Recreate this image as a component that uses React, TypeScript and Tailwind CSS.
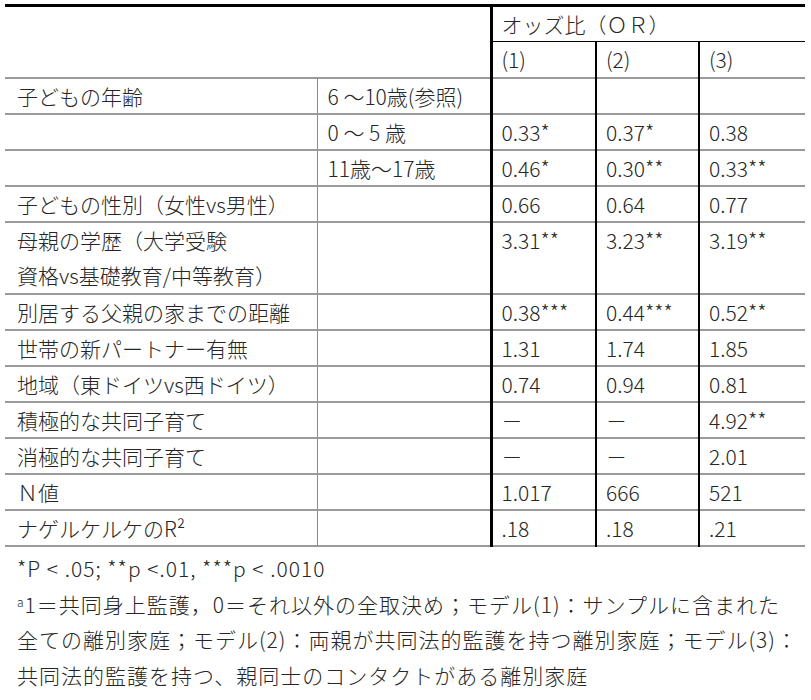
const rows: { label: string; sub?: string; v: [string, string, string]; tall?: boolean }[] = [
  { label: "子どもの年齢", sub: "6 ～10歳(参照)", v: ["", "", ""] },
  { label: "", sub: "0 ～ 5 歳", v: ["0.33*", "0.37*", "0.38"] },
  { label: "", sub: "11歳～17歳", v: ["0.46*", "0.30**", "0.33**"] },
  { label: "子どもの性別（女性vs男性）", v: ["0.66", "0.64", "0.77"] },
  { label: "母親の学歴（大学受験\n資格vs基礎教育/中等教育）", v: ["3.31**", "3.23**", "3.19**"], tall: true },
  { label: "別居する父親の家までの距離", v: ["0.38***", "0.44***", "0.52**"] },
  { label: "世帯の新パートナー有無", v: ["1.31", "1.74", "1.85"] },
  { label: "地域（東ドイツvs西ドイツ）", v: ["0.74", "0.94", "0.81"] },
  { label: "積極的な共同子育て", v: ["－", "－", "4.92**"] },
  { label: "消極的な共同子育て", v: ["－", "－", "2.01"] },
  { label: "Ｎ値", v: ["1.017", "666", "521"] },
  { label: "ナゲルケルケのR²", v: [".18", ".18", ".21"] },
]

export default function App() {
  return (
    <div
      className="w-[811px] h-[700px] bg-white pl-[5px] pt-[4px] text-[#262626] text-[21px] font-light"
      style={{ fontFamily: '"Noto Sans CJK JP", "Noto Sans", sans-serif' }}
    >
      <table className="border-collapse table-fixed w-[800px]">
        <colgroup>
          <col className="w-[312px]" />
          <col className="w-[174px]" />
          <col className="w-[105px]" />
          <col className="w-[103px]" />
          <col className="w-[106px]" />
        </colgroup>
        <thead>
          <tr className="border-t-[3px] border-t-black">
            <td colSpan={2} rowSpan={2} className="border-b-2 border-b-[#9a9a9a]" />
            <td colSpan={3} className="border-l-[3px] border-l-black border-b-[1.5px] border-b-black pl-[9px] leading-[34px]">
              オッズ比（ＯＲ）
            </td>
          </tr>
          <tr className="border-b-2 border-b-[#9a9a9a]">
            <td className="border-l-[3px] border-l-black pl-[9px] leading-[35px]">(1)</td>
            <td className="border-l-2 border-l-black pl-[9px] leading-[35px]">(2)</td>
            <td className="border-l-2 border-l-black pl-[9px] leading-[35px]">(3)</td>
          </tr>
        </thead>
        <tbody>
          {rows.map((r, i) => (
            <tr key={i} className={`border-b-2 border-b-[#9a9a9a] align-top ${r.tall ? "leading-[35px]" : "leading-[34px]"}`}>
              <td className="pl-[12px] whitespace-pre-line">{r.label}</td>
              <td className="border-l border-l-[#8a8a8a] pl-[10px] whitespace-nowrap">{r.sub ?? ""}</td>
              <td className="border-l-[3px] border-l-black pl-[9px]">{r.v[0]}</td>
              <td className="border-l-2 border-l-black pl-[9px]">{r.v[1]}</td>
              <td className="border-l-2 border-l-black pl-[9px]">{r.v[2]}</td>
            </tr>
          ))}
        </tbody>
      </table>
      <div className="pl-[12px] mt-[4px] leading-[35.5px] text-[21px] tracking-[1px] whitespace-nowrap">
        <div>*P &lt; .05; **p &lt;.01, ***p &lt; .0010</div>
        <div>
          <sup className="text-[12px]">a</sup>1＝共同身上監護，0＝それ以外の全取決め；モデル(1)：サンプルに含まれた
        </div>
        <div>全ての離別家庭；モデル(2)：両親が共同法的監護を持つ離別家庭；モデル(3)：</div>
        <div>共同法的監護を持つ、親同士のコンタクトがある離別家庭</div>
      </div>
    </div>
  )
}
